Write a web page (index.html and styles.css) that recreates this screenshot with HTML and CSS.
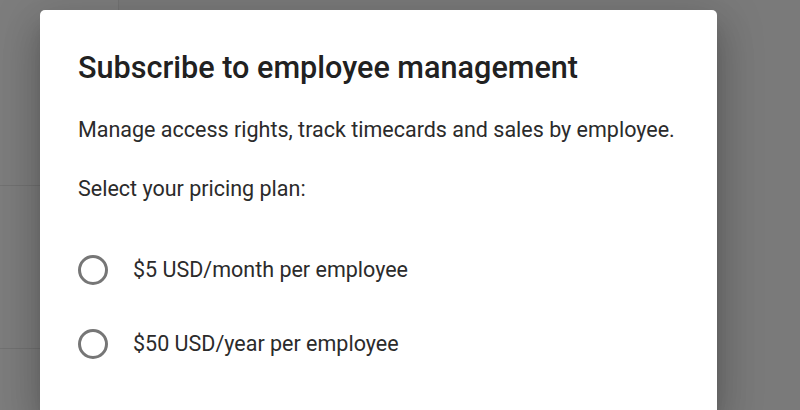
FILE: index.html
```html
<!DOCTYPE html>
<html>
<head>
<meta charset="utf-8">
<link rel="stylesheet" href="styles.css">
</head>
<body>
<div class="page">
  <div class="sidebar">
    <div class="sep sep-1"></div>
    <div class="sep sep-2"></div>
  </div>
  <div class="dialog">
    <h1 class="title">Subscribe to employee management</h1>
    <p class="desc">Manage access rights, track timecards and sales by employee.</p>
    <p class="desc select">Select your pricing plan:</p>
    <div class="options">
      <label class="option"><span class="radio"></span><span class="label">$5 USD/month per employee</span></label>
      <label class="option"><span class="radio"></span><span class="label">$50 USD/year per employee</span></label>
    </div>
  </div>
</div>
</body>
</html>
```
FILE: styles.css
```css
html, body {
  margin: 0;
  padding: 0;
  height: 100%;
  overflow: hidden;
}
body {
  background: #7a7a7a;
  font-family: Roboto, "Liberation Sans", sans-serif;
}
.page {
  position: relative;
  height: 410px;
  overflow: hidden;
}
.sidebar {
  position: absolute;
  left: 0;
  top: 0;
  width: 118px;
  height: 410px;
  background: #7d7d7d;
  border-right: 1px solid #737373;
}
.sep {
  position: absolute;
  left: 0;
  right: 0;
  height: 1px;
  background: #727272;
}
.sep-1 { top: 185px; }
.sep-2 { top: 348px; }
.dialog {
  position: absolute;
  left: 40px;
  top: 10px;
  width: 677px;
  height: 400px;
  box-sizing: border-box;
  background: #fff;
  border-radius: 5px 5px 0 0;
  padding: 40px 38px 0 38px;
  box-shadow: 0 11px 15px -7px rgba(0,0,0,0.2), 0 24px 38px 3px rgba(0,0,0,0.14), 0 9px 46px 8px rgba(0,0,0,0.12);
}
.title {
  margin: 0;
  font-size: 30.6px;
  line-height: 36px;
  font-weight: 500;
  color: #212121;
}
.desc {
  margin: 30px 0 0 0;
  font-size: 21.5px;
  line-height: 28px;
  color: #2b2b2b;
}
.select {
  margin-top: 31px;
}
.options {
  display: flex;
  flex-direction: column;
  gap: 26px;
  margin-top: 43px;
}
.option {
  display: flex;
  align-items: center;
  gap: 25px;
  height: 48px;
}
.radio {
  width: 24px;
  height: 24px;
  border: 3px solid #767676;
  border-radius: 50%;
  flex: none;
}
.label {
  font-size: 21.5px;
  line-height: 28px;
  color: #2b2b2b;
}
```
